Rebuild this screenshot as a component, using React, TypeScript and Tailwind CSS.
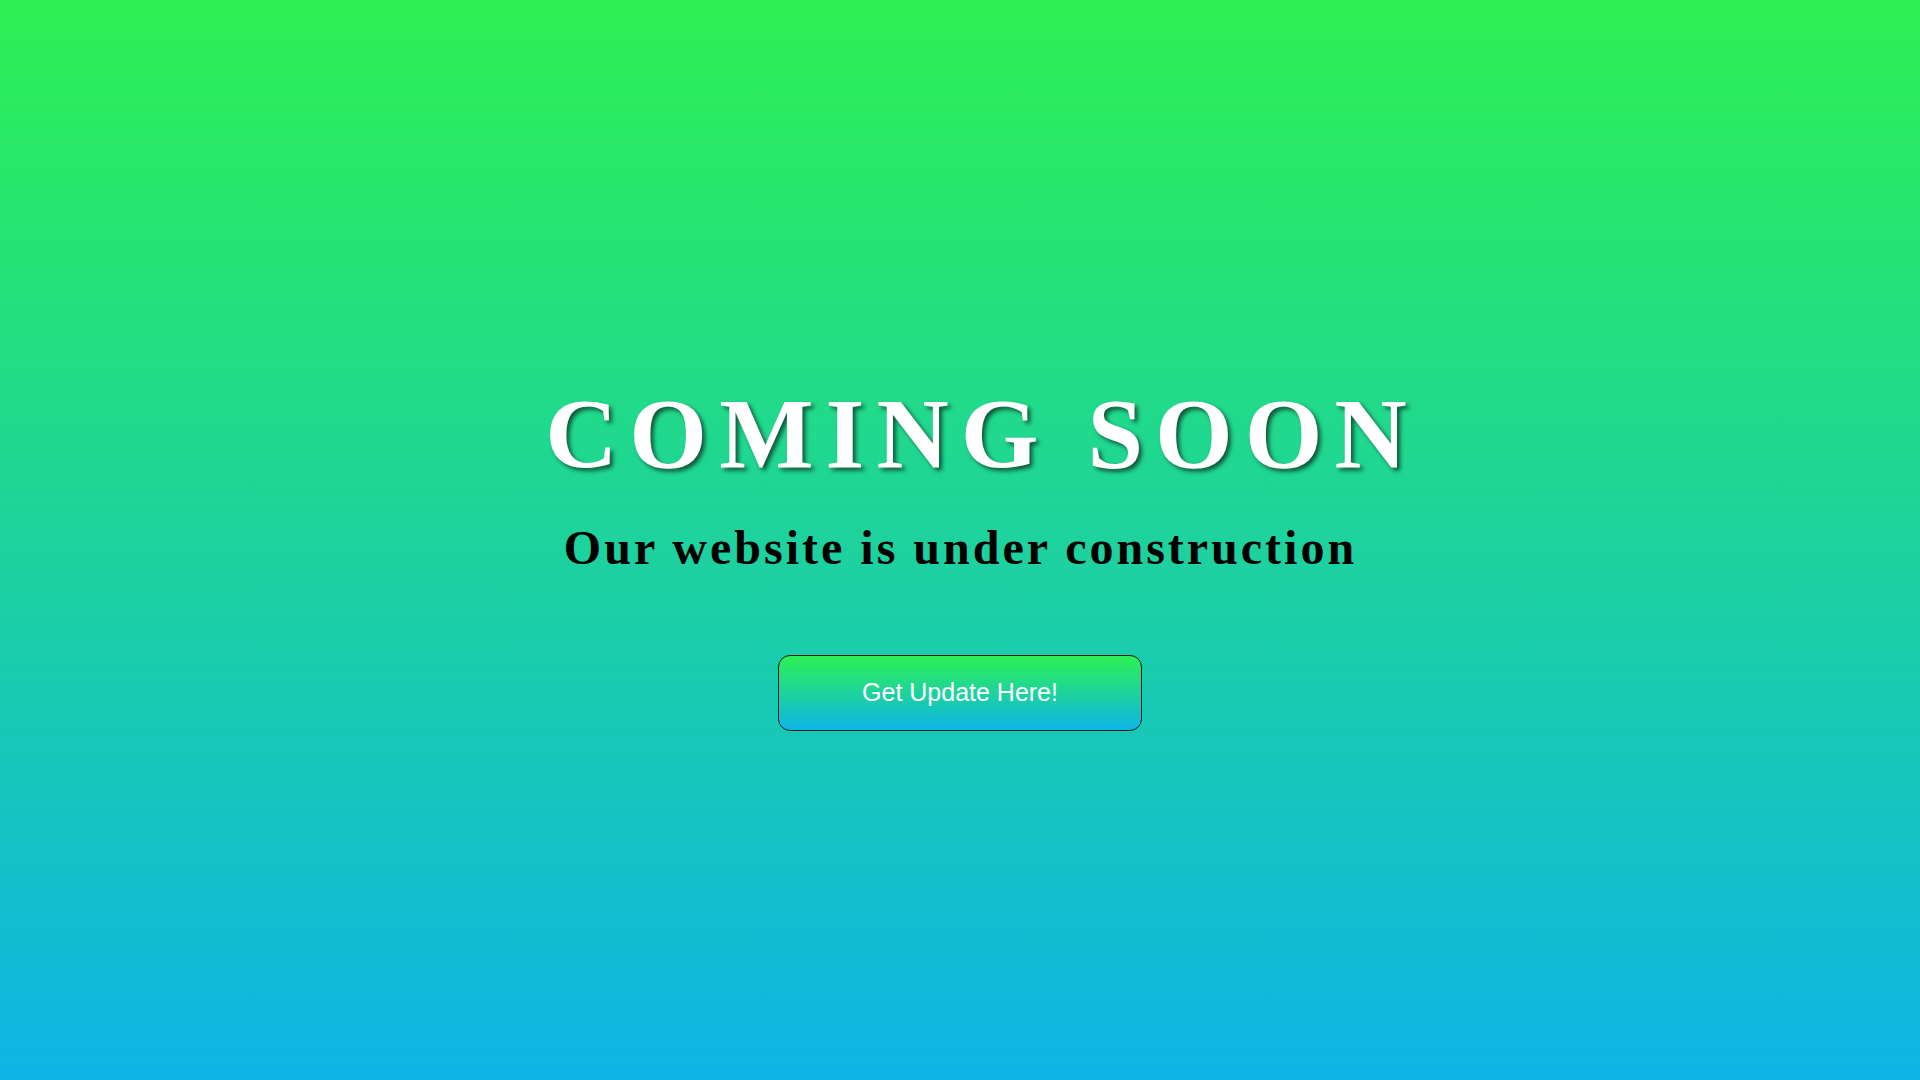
export default function App() {
  return (
    <div className="min-h-screen w-full bg-[linear-gradient(to_bottom,#2ef053,#0db5e6)] flex flex-col items-center pt-[384px]">
      <h1 className="font-['Liberation_Serif',serif] font-bold text-white text-[100px] leading-[100px] tracking-[12px] pl-[44px] [text-shadow:3px_3px_4px_rgba(0,0,0,0.6)]">
        COMING SOON
      </h1>
      <p className="mt-[40px] font-['Liberation_Serif',serif] font-bold text-black text-[48px] leading-[48px] tracking-[3px] pl-[1px]">
        Our website is under construction
      </p>
      <button className="mt-[83px] w-[364px] h-[76px] rounded-[12px] border border-[#1a1a1a] bg-[linear-gradient(to_bottom,#2ef053,#0db5e6)] text-white text-[25px] font-['Liberation_Sans',sans-serif]">
        Get Update Here!
      </button>
    </div>
  );
}
